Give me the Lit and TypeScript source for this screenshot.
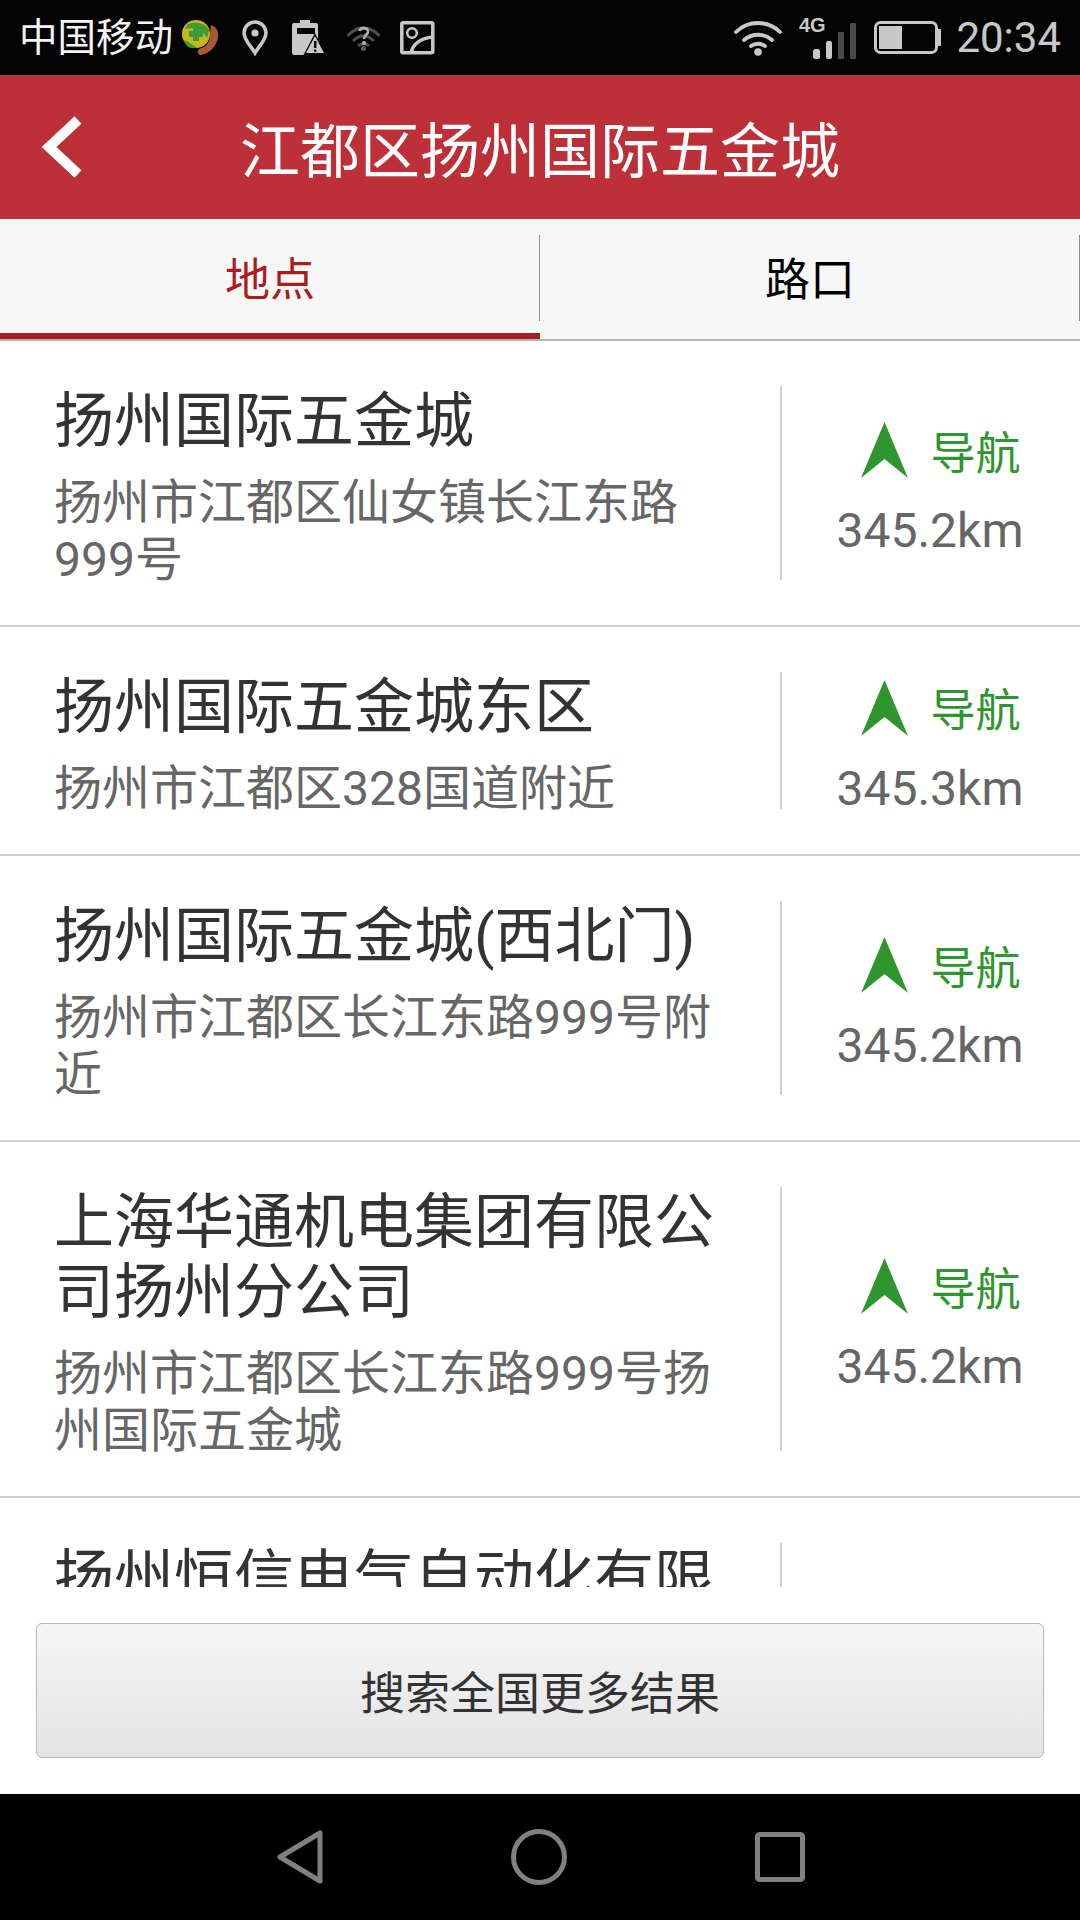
import { LitElement, html, css } from 'lit';
import { customElement } from 'lit/decorators.js';

interface Place {
  name: string;
  address: string;
  distance: string;
}

const PLACES: Place[] = [
  { name: '扬州国际五金城', address: '扬州市江都区仙女镇长江东路999号', distance: '345.2km' },
  { name: '扬州国际五金城东区', address: '扬州市江都区328国道附近', distance: '345.3km' },
  { name: '扬州国际五金城(西北门)', address: '扬州市江都区长江东路999号附近', distance: '345.2km' },
  { name: '上海华通机电集团有限公司扬州分公司', address: '扬州市江都区长江东路999号扬州国际五金城', distance: '345.2km' },
  { name: '扬州恒信电气自动化有限公司', address: '扬州市江都区长江东路999号扬州国际五金城', distance: '345.2km' },
];

@customElement('app-root')
export class AppRoot extends LitElement {
  static styles = css`
    :host {
      display: flex;
      flex-direction: column;
      width: 1080px;
      height: 1920px;
      background: #fff;
      overflow: hidden;
      font-family: Roboto, 'Noto Sans CJK SC', sans-serif;
    }

    svg {
      display: block;
      flex: none;
    }

    /* status bar */
    .status {
      flex: none;
      height: 75px;
      background: #040404;
      display: flex;
      align-items: center;
      padding: 0 19px;
      box-sizing: border-box;
    }
    .carrier {
      font-size: 38.5px;
      line-height: 75px;
      color: #f4f4f4;
      margin-right: 9px;
    }
    .ic-pin {
      margin-left: 23px;
    }
    .ic-batt {
      margin-left: 24px;
    }
    .ic-nowifi {
      margin-left: 22px;
    }
    .ic-photo {
      margin-left: 19px;
    }
    .spacer {
      flex: 1;
    }
    .ic-signal {
      margin-left: 16px;
    }
    .ic-level {
      margin-left: 18px;
    }
    .time {
      font-size: 42px;
      line-height: 75px;
      color: #c8c8c8;
      margin-left: 15px;
    }

    /* title bar */
    .title-bar {
      flex: none;
      height: 144px;
      background: #bd3037;
      display: grid;
      grid-template-columns: 1fr auto 1fr;
      align-items: center;
      color: #fff;
    }
    .back {
      padding-left: 40px;
    }
    .title {
      font-size: 60px;
      line-height: 128px;
      padding-top: 12px;
    }

    /* tabs */
    .tabs {
      flex: none;
      height: 122px;
      display: flex;
      box-sizing: border-box;
      background: #f7f7f7;
      border-bottom: 2px solid #b4b4b4;
    }
    .tab {
      width: 540px;
      height: 120px;
      box-sizing: border-box;
      padding-bottom: 6px;
      display: flex;
      align-items: center;
      justify-content: center;
      font-size: 45px;
      color: #000;
      position: relative;
    }
    .tab::after {
      content: '';
      position: absolute;
      right: 0;
      top: 16px;
      width: 1px;
      height: 86px;
      background: #8c8c8c;
    }
    .tab.active {
      color: #ab1c1e;
      border-bottom: 6px solid #ab1c1e;
      padding-bottom: 0;
    }

    /* result list */
    .list {
      flex: none;
      height: 1246px;
      overflow: hidden;
    }
    .row {
      display: flex;
      padding: 45px 0 45px 54px;
      border-bottom: 2px solid #cfcfcf;
    }
    .info {
      width: 726px;
      box-sizing: border-box;
      padding: 1px 46px 0 0;
    }
    .name {
      font-size: 60px;
      line-height: 70px;
      color: #333;
      margin-bottom: 17px;
    }
    .address {
      font-size: 48px;
      line-height: 57px;
      color: #666;
      margin-bottom: -8px;
    }
    .nav {
      flex: 1;
      border-left: 2px solid #cfcfcf;
      display: flex;
      flex-direction: column;
      align-items: center;
      justify-content: center;
      padding-top: 7px;
    }
    .go {
      display: flex;
      align-items: center;
      gap: 22px;
      height: 56px;
      padding-left: 20px;
      font-size: 45px;
      color: #2f962f;
    }
    .distance {
      font-size: 48px;
      line-height: 40px;
      color: #666;
      margin-top: 33px;
      margin-right: 2px;
    }

    /* bottom button */
    .footer {
      flex: none;
      height: 207px;
      box-sizing: border-box;
      padding: 36px;
    }
    .more {
      height: 135px;
      box-sizing: border-box;
      border: 1px solid #b8b8b8;
      border-radius: 6px;
      background: linear-gradient(#f6f6f6, #e3e3e3);
      display: flex;
      align-items: center;
      justify-content: center;
      font-size: 45px;
      color: #333;
    }

    /* system nav */
    .sysnav {
      flex: none;
      height: 126px;
      background: #000;
      display: flex;
      align-items: center;
      justify-content: center;
      gap: 188px;
      padding-left: 2px;
    }
  `;

  private icons() {
    return {
      chat: html`<svg width="37" height="36" viewBox="0 0 37 36">
        <path d="M29 5c6 2 8 7 7 13-2 9-9 16-17 17-2 0-4-2-3-4 1-3 4-3 6-4 3-2 5-5 6-9 0-3 0-5 1-13z" fill="#a85a36" />
        <circle cx="14" cy="14" r="14" fill="#c7b71f" />
        <path d="M6 4c8-3 17-1 21 6l-2 8C20 9 12 7 3 9z" fill="#3f9a35" />
        <path d="M2 20c5 2 10 5 13 8H9c-4-1-6-4-7-8z" fill="#3f9a35" />
        <path d="M11 7h6v4h4v6h-4v4h-6v-4H7v-6h4z" fill="#3c9a3a" />
      </svg>`,
      pin: html`<svg width="26" height="36" viewBox="0 0 26 36">
        <path d="M13 2a11 11 0 0 1 11 11c0 7-7 13-11 20C9 26 2 20 2 13A11 11 0 0 1 13 2z" fill="none" stroke="#c8c8c8" stroke-width="3.5" />
        <circle cx="13" cy="13" r="3.6" fill="#c8c8c8" />
      </svg>`,
      battery: html`<svg width="32" height="36" viewBox="0 0 32 36">
        <path d="M8 0h10v3h6a2 2 0 0 1 2 2v30H2a2 2 0 0 1-2-2V5a2 2 0 0 1 2-2h6z" fill="#c8c8c8" />
        <path d="M5 8h18v6H5z" fill="#040404" />
        <path d="M23 13L34 36H11z" fill="#040404" />
        <path d="M23 16l9 17H14z" fill="#c8c8c8" />
        <path d="M22 21h2.4v7H22zM22 29.5h2.4v2.2H22z" fill="#040404" />
      </svg>`,
      noWifi: html`<svg width="35" height="26" viewBox="0 0 35 26">
        <path d="M1.5 11c10-11 22-11 32 0M7 16c7-7 14-7 21 0M12 21c3-3 8-3 11 0" fill="none" stroke="#4f4f4f" stroke-width="3" />
        <path d="M13.5 6c1-4 9-4 8.5 1-.5 3-4 3-4 7" fill="none" stroke="#b4b4b4" stroke-width="2.6" />
        <circle cx="18" cy="18" r="2" fill="#b4b4b4" />
        <circle cx="17.5" cy="23.5" r="2.5" fill="#5a5a5a" />
      </svg>`,
      photo: html`<svg width="35" height="34" viewBox="0 0 35 34">
        <rect x="1.8" y="1.8" width="31" height="30" rx="1.5" fill="none" stroke="#c8c8c8" stroke-width="3.5" />
        <circle cx="12" cy="12" r="4.8" fill="none" stroke="#c8c8c8" stroke-width="2.5" />
        <path d="M11 32C13 23 21 17 33 16" fill="none" stroke="#c8c8c8" stroke-width="3.5" />
      </svg>`,
      wifi: html`<svg width="50" height="36" viewBox="0 0 50 36">
        <path d="M3 12C15 0 35 0 47 12M11 20c8-7 20-7 28 0M18 26c4-3 10-3 14 0" fill="none" stroke="#c8c8c8" stroke-width="3.8" stroke-linecap="round" />
        <circle cx="25" cy="32" r="3.8" fill="#c8c8c8" />
      </svg>`,
      signal: html`<svg width="57" height="42" viewBox="0 0 57 42">
        <text x="0" y="15" font-family="Liberation Sans, sans-serif" font-size="20" font-weight="700" fill="#c8c8c8">4G</text>
        <rect x="14" y="32" width="7" height="10" rx="2.5" fill="#c8c8c8" />
        <rect x="27" y="24" width="6" height="18" rx="2" fill="#c8c8c8" />
        <rect x="39" y="15" width="6" height="27" rx="1" fill="#4a4a4a" />
        <rect x="51" y="6" width="6" height="36" rx="1" fill="#4a4a4a" />
      </svg>`,
      level: html`<svg width="67" height="33" viewBox="0 0 67 33">
        <rect x="1.5" y="1.5" width="61" height="30" rx="5" fill="none" stroke="#c8c8c8" stroke-width="3" />
        <rect x="63" y="8" width="4" height="17" rx="1" fill="#c8c8c8" />
        <rect x="5" y="5" width="23" height="23" fill="#c8c8c8" />
      </svg>`,
    };
  }

  private renderPlace(place: Place) {
    return html`
      <div class="row">
        <div class="info">
          <div class="name">${place.name}</div>
          <div class="address">${place.address}</div>
        </div>
        <div class="nav">
          <div class="go">
            <svg width="47" height="56" viewBox="0 0 47 56">
              <path d="M23.5 0L47 56 23.5 37 0 56z" fill="#2f962f" />
            </svg>
            <span>导航</span>
          </div>
          <div class="distance">${place.distance}</div>
        </div>
      </div>
    `;
  }

  render() {
    const i = this.icons();
    return html`
      <div class="status">
        <span class="carrier">中国移动</span>
        ${i.chat}
        <span class="ic-pin">${i.pin}</span>
        <span class="ic-batt">${i.battery}</span>
        <span class="ic-nowifi">${i.noWifi}</span>
        <span class="ic-photo">${i.photo}</span>
        <span class="spacer"></span>
        ${i.wifi}
        <span class="ic-signal">${i.signal}</span>
        <span class="ic-level">${i.level}</span>
        <span class="time">20:34</span>
      </div>

      <div class="title-bar">
        <div class="back">
          <svg width="46" height="64" viewBox="0 0 46 64">
            <path d="M38 5L9 32l29 27" fill="none" stroke="#fff" stroke-width="10" />
          </svg>
        </div>
        <div class="title">江都区扬州国际五金城</div>
      </div>

      <div class="tabs">
        <div class="tab active">地点</div>
        <div class="tab">路口</div>
      </div>

      <div class="list">${PLACES.map((p) => this.renderPlace(p))}</div>

      <div class="footer">
        <div class="more">搜索全国更多结果</div>
      </div>

      <div class="sysnav">
        <svg width="46" height="54" viewBox="0 0 46 54">
          <path d="M43 3v48L3 27z" fill="none" stroke="#808080" stroke-width="5" stroke-linejoin="round" />
        </svg>
        <svg width="56" height="56" viewBox="0 0 56 56">
          <circle cx="28" cy="28" r="25.5" fill="none" stroke="#808080" stroke-width="5" />
        </svg>
        <svg width="50" height="50" viewBox="0 0 50 50">
          <rect x="2.5" y="2.5" width="45" height="45" rx="2" fill="none" stroke="#808080" stroke-width="5" />
        </svg>
      </div>
    `;
  }
}

declare global {
  interface HTMLElementTagNameMap {
    'app-root': AppRoot;
  }
}
